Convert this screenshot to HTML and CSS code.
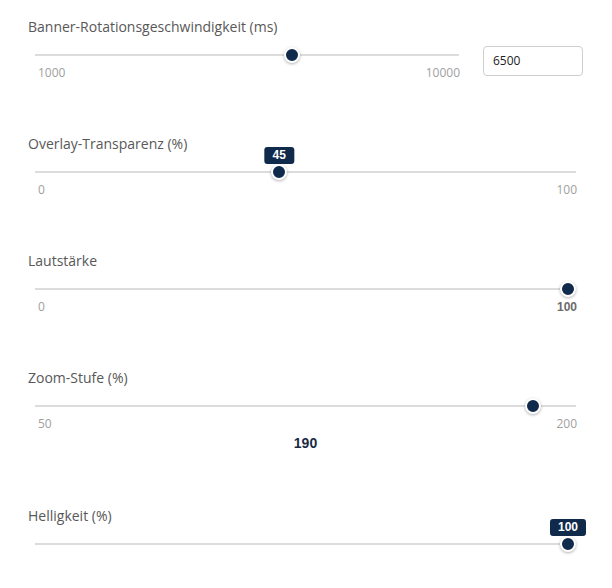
FILE: index.html
```html
<!DOCTYPE html>
<html lang="de">
<head>
<meta charset="utf-8">
<title>Einstellungen</title>
<link rel="stylesheet" href="styles.css">
</head>
<body>
<div class="panel">
  <div class="field">
    <div class="label">Banner-Rotationsgeschwindigkeit (ms)</div>
    <div class="row">
      <div class="slider">
        <div class="rail"><div class="track"></div><div class="thumb" style="--p:0.6111"></div></div>
        <div class="ticks"><span>1000</span><span>10000</span></div>
      </div>
      <input class="num" type="text" value="6500">
    </div>
  </div>

  <div class="field">
    <div class="label">Overlay-Transparenz (%)</div>
    <div class="slider">
      <div class="rail"><div class="track"></div><div class="thumb" style="--p:0.45"><span class="tip">45</span></div></div>
      <div class="ticks"><span>0</span><span>100</span></div>
    </div>
  </div>

  <div class="field">
    <div class="label">Lautstärke</div>
    <div class="slider">
      <div class="rail"><div class="track"></div><div class="thumb" style="--p:1"></div></div>
      <div class="ticks"><span>0</span><span class="active">100</span></div>
    </div>
  </div>

  <div class="field">
    <div class="label">Zoom-Stufe (%)</div>
    <div class="slider">
      <div class="rail"><div class="track"></div><div class="thumb" style="--p:0.9333"></div></div>
      <div class="ticks"><span>50</span><span>200</span></div>
    </div>
    <div class="value">190</div>
  </div>

  <div class="field">
    <div class="label">Helligkeit (%)</div>
    <div class="slider">
      <div class="rail"><div class="track"></div><div class="thumb" style="--p:1"><span class="tip">100</span></div></div>
    </div>
  </div>
</div>
</body>
</html>
```
FILE: styles.css
```css
* { box-sizing: border-box; }
html, body { margin: 0; padding: 0; background: #fff; }
body { font-family: "Open Sans", "Liberation Sans", sans-serif; }

.panel {
  width: 555px;
  margin-left: 28px;
  padding-top: 16.6px;
}

.field { margin-bottom: 53.3px; }

.label {
  font-size: 14px;
  line-height: 20px;
  color: #585858;
  margin-bottom: 10px;
}

.row {
  display: flex;
  align-items: flex-start;
  gap: 17px;
}
.row .slider { flex: 1; }

.slider { padding: 0 7px; }

.rail {
  position: relative;
  height: 16px;
  display: flex;
  align-items: center;
}
.track {
  width: 100%;
  height: 2px;
  background: #dcdcdc;
}
.thumb {
  position: absolute;
  top: 0;
  left: calc(var(--p) * (100% - 16px));
  width: 16px;
  height: 16px;
  border-radius: 50%;
  background: #0f2a4a;
  border: 2px solid #fff;
  box-shadow: 0 1px 3px rgba(0, 0, 0, 0.3);
}
.tip {
  position: absolute;
  bottom: calc(100% + 2px);
  left: 50%;
  transform: translateX(-50%);
  height: 17px;
  line-height: 17px;
  padding: 0 8px;
  border-radius: 3px;
  background: #0f2a4a;
  color: #fff;
  font-family: "Liberation Sans", Arial, sans-serif;
  font-weight: bold;
  font-size: 12px;
  white-space: nowrap;
}

.ticks {
  display: flex;
  justify-content: space-between;
  margin-top: 2px;
  padding-left: 3px;
  margin-right: -1px;
  font-size: 12px;
  line-height: 16px;
  color: #a0a0a0;
}
.ticks .active {
  font-family: "Liberation Sans", Arial, sans-serif;
  font-weight: bold;
  color: #6b6b6b;
}

.num {
  width: 100px;
  height: 30px;
  margin: -1px 0 0;
  padding: 0 9px;
  border: 1px solid #cfcfcf;
  border-radius: 4px;
  font-family: "Open Sans", sans-serif;
  font-size: 12px;
  color: #222;
  background: #fff;
  outline: none;
}

.value {
  margin-top: 2px;
  text-align: center;
  font-family: "Liberation Sans", Arial, sans-serif;
  font-weight: bold;
  font-size: 14px;
  line-height: 18px;
  color: #1a2b45;
}
```
